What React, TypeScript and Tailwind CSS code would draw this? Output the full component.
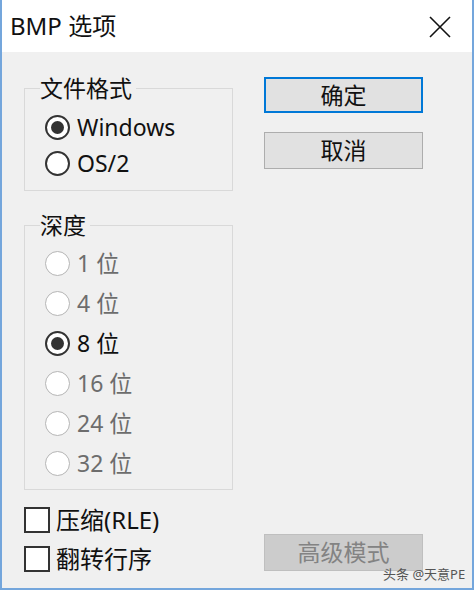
import React from 'react';

const font = { fontFamily: '"Noto Sans", "Noto Sans CJK SC", sans-serif' };

const Radio: React.FC<{ label: string; checked?: boolean; disabled?: boolean; h: string }> = ({ label, checked, disabled, h }) => (
  <div className={`flex items-center ml-[5px] gap-[7px] ${h}`}>
    <div
      className={`w-[25px] h-[25px] rounded-full bg-white flex items-center justify-center ${
        disabled ? 'border border-[#b5b5b5]' : 'border-2 border-[#333]'
      }`}
    >
      {checked && <div className="w-[13px] h-[13px] rounded-full bg-[#333]" />}
    </div>
    <span className={`text-[23px] leading-none ${disabled ? 'text-[#6d6d6d]' : 'text-[#111]'}`}>{label}</span>
  </div>
);

const Check: React.FC<{ label: string }> = ({ label }) => (
  <div className="flex items-center h-[39px] gap-[6px]">
    <div className="w-[26px] h-[26px] border-2 border-[#333] bg-white" />
    <span className="text-[24px] leading-none text-[#111]">{label}</span>
  </div>
);

export default function App() {
  const depths = [
    { label: '1 位', disabled: true },
    { label: '4 位', disabled: true },
    { label: '8 位', checked: true },
    { label: '16 位', disabled: true },
    { label: '24 位', disabled: true },
    { label: '32 位', disabled: true },
  ];

  return (
    <div className="relative w-[474px] h-[590px] flex flex-col border-x-2 border-b-2 border-[#74a6dc] bg-white" style={font}>
      {/* title bar */}
      <div className="h-[52px] flex items-center justify-between pl-[8px] pr-[20px] bg-white">
        <span className="text-[24px] text-[#111]">BMP 选项</span>
        <svg width="24" height="24" viewBox="0 0 24 24" className="mt-[1px]">
          <path d="M2 2 L22 22 M22 2 L2 22" stroke="#111" strokeWidth="1.6" fill="none" />
        </svg>
      </div>

      <div className="flex-1 flex bg-[#f0f0f0] pl-[22px]">
        {/* left column */}
        <div className="w-[209px] pt-[24px] flex flex-col">
          <fieldset className="border border-[#d9d9d9] px-[15px] pb-[9px]">
            <legend className="text-[23px] leading-[24px] text-[#111] pr-[4px]">文件格式</legend>
            <div className="pt-[9px]">
              <Radio label="Windows" checked h="h-[36px]" />
              <Radio label="OS/2" h="h-[36px]" />
            </div>
          </fieldset>

          <fieldset className="mt-[22px] border border-[#d9d9d9] px-[15px] pb-[6px]">
            <legend className="text-[23px] leading-[24px] text-[#111] pr-[4px]">深度</legend>
            <div className="pt-[6px]">
              {depths.map((d) => (
                <Radio key={d.label} label={d.label} checked={d.checked} disabled={d.disabled} h="h-[40px]" />
              ))}
            </div>
          </fieldset>

          <div className="mt-[10px]">
            <Check label="压缩(RLE)" />
            <Check label="翻转行序" />
          </div>
        </div>

        {/* right column */}
        <div className="ml-[31px] w-[159px] pt-[25px] pb-[17px] flex flex-col">
          <button className="h-[36px] border-2 border-[#0078d7] bg-[#e1e1e1] text-[23px] leading-none text-[#111]">
            确定
          </button>
          <button className="mt-[19px] h-[37px] border border-[#adadad] bg-[#e1e1e1] text-[23px] leading-none text-[#111]">
            取消
          </button>
          <button className="mt-auto h-[37px] border border-[#bfbfbf] bg-[#cccccc] text-[23px] leading-none text-[#838383]">
            高级模式
          </button>
        </div>
      </div>

      <span className="absolute left-[381px] top-[565px] text-[13px] text-[#555]">头条 @天意PE</span>
    </div>
  );
}
